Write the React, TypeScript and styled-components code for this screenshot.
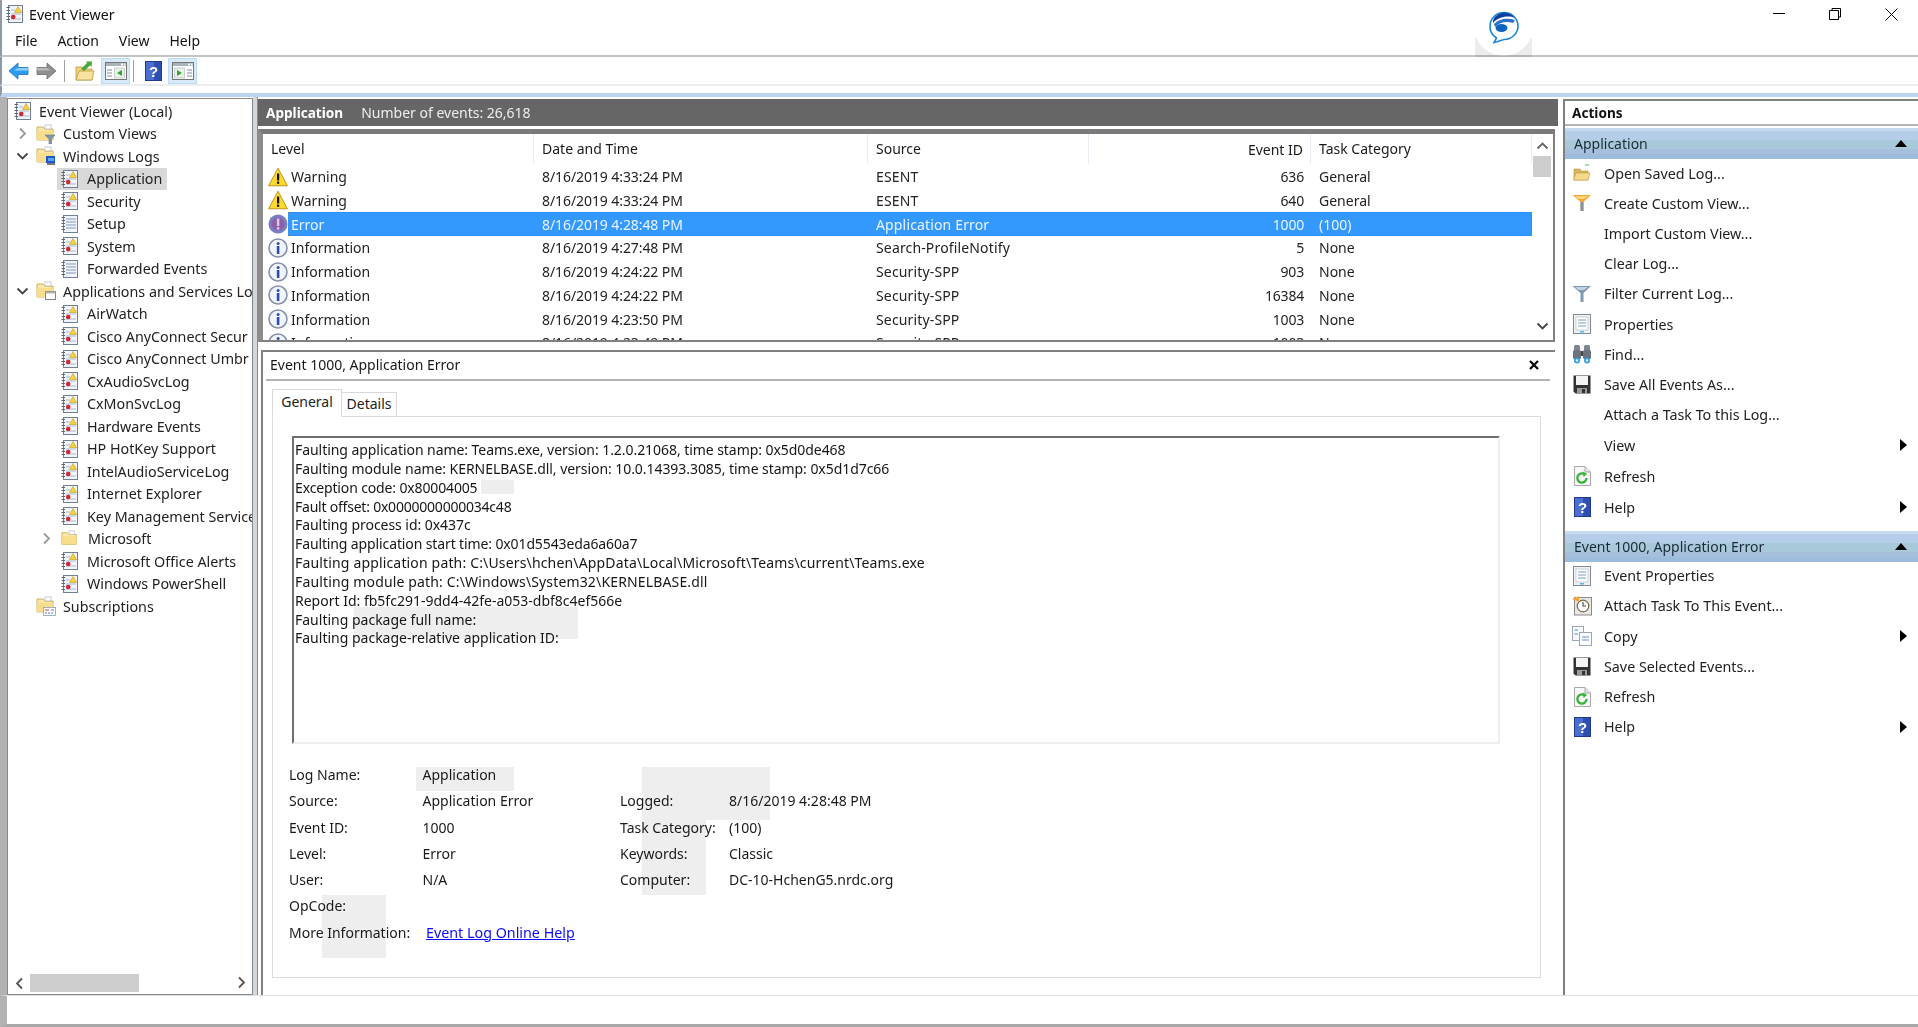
import React from "react";
import styled, { createGlobalStyle, css } from "styled-components";

const Global = createGlobalStyle`
  html, body { margin: 0; padding: 0; background: #fff; overflow: hidden; }
  * { box-sizing: border-box; }
  #root { width: 1918px; height: 1027px; }
`;

const FONT = `"Noto Sans", "Open Sans", "Liberation Sans", sans-serif`;

const Window = styled.div`
  position: relative;
  width: 1918px;
  height: 1027px;
  display: flex;
  flex-direction: column;
  background: #fff;
  font-family: ${FONT};
  font-size: 14px;
  color: #1a1a1a;
  overflow: hidden;
  filter: blur(0.3px);
`;
const TitleBar = styled.div`
  height: 28px;
  flex: none;
  display: flex;
  align-items: center;
  padding-left: 4px;
  border-left: 2px solid #8f9aa6;
  gap: 5px;
`;
const TitleText = styled.span`
  font-size: 14.2px;
  color: #111;
`;
const Controls = styled.div`
  margin-left: auto;
  margin-right: -2px;
  display: flex;
`;
const Control = styled.div`
  width: 56.5px;
  height: 26px;
  display: flex;
  align-items: center;
  justify-content: center;
`;
const LogoBubble = styled.div`
  position: absolute;
  left: 1475px;
  top: 11px;
  width: 57px;
  height: 46px;
  display: flex;
  justify-content: center;
  &::after {
    content: "";
    position: absolute;
    left: 0;
    right: 0;
    top: 27px;
    height: 19px;
    background: radial-gradient(circle at 50% -12px, #fff 29.5px, #ececec 30px);
    mix-blend-mode: multiply;
  }
`;
const MenuBar = styled.div`
  height: 29px;
  flex: none;
  display: flex;
  gap: 20px;
  align-items: center;
  padding: 0 0 2px 13px;
  border-left: 2px solid #8f9aa6;
  border-bottom: 2px solid #c4c4c4;
`;
const MenuItem = styled.span`
  font-size: 14px;
  color: #111;
`;
const Toolbar = styled.div`
  height: 29px;
  flex: none;
  display: flex;
  align-items: center;
  padding: 1px 0 0 2px;
  border-left: 2px solid #8f9aa6;
  border-bottom: 2px solid #eeeeee;
`;
const ToolButton = styled.div<{ $w: number; $on?: boolean }>`
  width: ${(p) => p.$w}px;
  height: 26px;
  display: flex;
  align-items: center;
  justify-content: center;
  ${(p) =>
    p.$on &&
    css`
      background: #d8e9f9;
      border: 1px solid #bcdcf4;
    `}
`;
const ToolSep = styled.div<{ $after: number }>`
  width: 1px;
  height: 22px;
  background: #a0a0a0;
  margin: 0 ${(p) => p.$after}px 0 3px;
`;
const BlueRule = styled.div`
  height: 11px;
  flex: none;
  border-left: 2px solid #8f9aa6;
  border-bottom: 4px solid #bcd4f0;
`;
const Main = styled.div`
  flex: 1;
  min-height: 0;
  display: flex;
  border-left: 7px solid #b2b2b2;
`;
const LeftPane = styled.div`
  width: 246px;
  flex: none;
  margin-top: 1px;
  display: flex;
  flex-direction: column;
  border: 1px solid #808a90;
  border-top: 1px solid #8a8a8a;
  background: #fff;
`;
const Tree = styled.div`
  flex: 1;
  min-height: 0;
  overflow: hidden;
  padding-top: 0.75px;
`;
const TreeRow = styled.div<{ $kind: string }>`
  height: 22.5px;
  display: flex;
  align-items: center;
  white-space: nowrap;
  padding-left: ${(p) =>
    p.$kind === "root" ? 6 : p.$kind === "branch" ? 7 : p.$kind === "sub" ? 31 : 49}px;
`;
const TreeInner = styled.div<{ $on?: boolean; $leaf?: boolean }>`
  display: flex;
  align-items: center;
  height: 22px;
  padding: ${(p) => (p.$leaf ? "0 5px 0 4px" : "0")};
  background: ${(p) => (p.$on ? "#d9d9d9" : "transparent")};
`;
const Chev = styled.span<{ $gap: number }>`
  width: 14px;
  margin-right: ${(p) => p.$gap}px;
  display: flex;
  justify-content: center;
  flex: none;
`;
const IconSlot = styled.span<{ $w: number; $gap: number }>`
  width: ${(p) => p.$w}px;
  margin-right: ${(p) => p.$gap}px;
  display: flex;
  justify-content: center;
  flex: none;
`;
const TreeText = styled.span`
  font-size: 14.3px;
  color: #222;
`;
const HScroll = styled.div`
  height: 20px;
  flex: none;
  display: flex;
  align-items: center;
  padding: 0 6px 2px 7px;
`;
const HThumb = styled.div`
  width: 109px;
  height: 18px;
  margin-left: 6px;
  background: #cdcdcd;
`;
const HEnd = styled.div`
  margin-left: auto;
`;
const Splitter = styled.div`
  width: 5px;
  flex: none;
  background: #d6d6d6;
  border-right: 1px solid #8a8a8a;
`;
const Center = styled.div`
  width: 1300px;
  flex: none;
  display: flex;
  flex-direction: column;
`;
const ResultHead = styled.div`
  height: 27px;
  flex: none;
  margin-top: 2px;
  background: #666666;
  display: flex;
  align-items: center;
  gap: 18px;
  padding-left: 8px;
  color: #ededed;
`;
const ResultTitle = styled.strong`
  color: #fff;
  font-weight: 700;
  font-size: 13.6px;
`;
const ListFrame = styled.div`
  height: 213px;
  flex: none;
  margin-top: 3px;
  margin-right: 3px;
  display: flex;
  border-left: 5px solid #8c8c8c;
  border-top: 5px solid #7a7a7a;
  border-right: 2px solid #808080;
  border-bottom: 2px solid #808080;
  background: #fff;
  overflow: hidden;
`;
const ListBody = styled.div`
  flex: 1;
  min-width: 0;
  overflow: hidden;
`;
const COLS = "271px 334px 221px 222px 1fr";
const ListHead = styled.div`
  height: 30.8px;
  display: grid;
  grid-template-columns: ${COLS};
  align-items: center;
`;
const HeadCell = styled.div<{ $right?: boolean }>`
  height: 30px;
  display: flex;
  align-items: center;
  justify-content: ${(p) => (p.$right ? "flex-end" : "flex-start")};
  padding: ${(p) => (p.$right ? "0 7px 0 0" : "0 0 2px 8px")};
  border-right: 1px solid #e6ecf2;
`;
const ListRow = styled.div<{ $sel?: boolean }>`
  position: relative;
  height: 23.75px;
  display: grid;
  grid-template-columns: ${COLS};
  align-items: center;
  color: ${(p) => (p.$sel ? "#eaf4ff" : "#222")};
  ${(p) =>
    p.$sel &&
    css`
      background: linear-gradient(90deg, transparent 25px, #3399ff 25px);
      &::after {
        content: "";
        position: absolute;
        left: 25px;
        right: 0;
        top: 0;
        bottom: 0;
        border-top: 1px dotted #b3662a;
        border-bottom: 1px dotted #b3662a;
        border-right: 1px dotted #b3662a;
      }
    `}
`;
const LevelCell = styled.div`
  display: flex;
  align-items: center;
  padding-left: 5px;
  gap: 3px;
`;
const Cell = styled.div<{ $right?: boolean; $ls?: number }>`
  padding: ${(p) => (p.$right ? "0 7px 0 0" : "0 0 0 8px")};
  text-align: ${(p) => (p.$right ? "right" : "left")};
  white-space: nowrap;
  letter-spacing: ${(p) => p.$ls ?? 0}px;
`;
const VScroll = styled.div`
  width: 21px;
  flex: none;
  display: flex;
  flex-direction: column;
  align-items: center;
  padding: 7px 2px 5px 1px;
`;
const VThumb = styled.div`
  width: 18px;
  height: 21px;
  margin-top: 6px;
  background: #cdcdcd;
`;
const VEnd = styled.div`
  margin-top: auto;
`;
const Detail = styled.div`
  flex: 1;
  min-height: 0;
  margin: 8px 3px 0 3px;
  border-left: 2px solid #808080;
  border-top: 2px solid #808080;
  display: flex;
  flex-direction: column;
`;
const DetailHead = styled.div`
  height: 29px;
  flex: none;
  margin: 0 5px 0 3px;
  padding: 0 11px 2px 4px;
  display: flex;
  align-items: center;
  justify-content: space-between;
  border-bottom: 2px solid #b4b4b4;
`;
const Tabs = styled.div`
  display: flex;
  align-items: flex-end;
  height: 28px;
  margin: 7px 0 0 9px;
  flex: none;
`;
const Tab = styled.div<{ $on?: boolean }>`
  height: ${(p) => (p.$on ? 28 : 25)}px;
  width: ${(p) => (p.$on ? 70 : 55)}px;
  padding-bottom: 3px;
  border: 1px solid #d9d9d9;
  border-bottom: ${(p) => (p.$on ? "1px solid #fff" : "1px solid #d9d9d9")};
  border-left: ${(p) => (p.$on ? "1px solid #d9d9d9" : "none")};
  margin-bottom: -1px;
  background: #fff;
  position: relative;
  display: flex;
  align-items: center;
  justify-content: center;
  color: #222;
`;
const TabBody = styled.div`
  width: 1269px;
  height: 562px;
  margin-left: 9px;
  flex: none;
  border: 1px solid #dcdcdc;
  padding: 19px 0 0 19px;
`;
const MessageBox = styled.div`
  width: 1208px;
  height: 307.5px;
  border-left: 2px solid #6f6f6f;
  border-top: 2px solid #6f6f6f;
  border-right: 2px solid #eeeeee;
  border-bottom: 2px solid #eeeeee;
  padding: 3px 0 0 1px;
`;
const MsgLine = styled.div<{ $ls: number }>`
  height: 18.85px;
  line-height: 18.85px;
  white-space: nowrap;
  color: #161616;
  letter-spacing: ${(p) => p.$ls}px;
`;
const Summary = styled.div`
  margin: 18px 0 0 -3px;
  display: grid;
  grid-template-columns: 133.5px 197.5px 109px 1fr;
  grid-auto-rows: 26.25px;
  align-items: center;
  white-space: nowrap;
`;
const MoreLink = styled.a`
  color: #0b0bff;
  text-decoration: underline;
  margin-left: 3.5px;
  font-size: 14.3px;
`;
const Empty = styled.span``;
const Actions = styled.div`
  margin-left: 5px;
  flex: 1;
  min-width: 0;
  margin-top: 2px;
  border-left: 2px solid #808080;
  border-top: 2px solid #808080;
  display: flex;
  flex-direction: column;
`;
const ActionsHead = styled.div`
  height: 25px;
  flex: none;
  display: flex;
  align-items: center;
  padding-left: 7px;
  font-weight: 700;
  font-size: 13.6px;
  color: #111;
  border-bottom: 2px solid #b4b4b4;
`;
const Band = styled.div<{ $gap: number }>`
  height: 31px;
  flex: none;
  margin-top: ${(p) => p.$gap}px;
  display: flex;
  align-items: center;
  justify-content: space-between;
  padding: 0 11px 0 9px;
  color: #1a2a3a;
  background: linear-gradient(
    180deg,
    #c5d9f1 0 10%,
    #b6cdea 10% 38%,
    #a8c9da 38% 68%,
    #a6bfdd 68% 85%,
    #9cbcdc 85% 100%
  );
`;
const ActionItem = styled.div<{ $tall?: boolean }>`
  height: ${(p) => (p.$tall ? 31 : 30.2)}px;
  flex: none;
  display: flex;
  align-items: center;
  padding: 0 11px 2px 7px;
  color: #222;
  font-size: 14.3px;
`;
const ActionIcon = styled.span`
  width: 20px;
  margin-right: 12px;
  display: flex;
  justify-content: center;
  flex: none;
`;
const SubArrow = styled.span`
  margin-left: auto;
  display: flex;
`;
const StatusBar = styled.div`
  height: 32px;
  flex: none;
  border-left: 7px solid #b2b2b2;
  border-top: 1px solid #e0e0e0;
  border-bottom: 3px solid #a8a8a8;
  background: #fff;
`;
const Patch = styled.div<{ $l: number; $t: number; $w: number; $h: number }>`
  position: absolute;
  left: ${(p) => p.$l}px;
  top: ${(p) => p.$t}px;
  width: ${(p) => p.$w}px;
  height: ${(p) => p.$h}px;
  background: #eeeeee;
  mix-blend-mode: multiply;
  pointer-events: none;
`;

/* ---------- icons ---------- */
const Spiral = () => (
  <g stroke="#56657a" strokeWidth="1">
    {[2.5, 5.5, 8.5, 11.5, 14.5].map((y) => (
      <line key={y} x1="0.5" x2="4" y1={y} y2={y} />
    ))}
  </g>
);
const LogIcon = ({ plain, size = 18 }: { plain?: boolean; size?: number }) => (
  <svg width={size} height={size} viewBox="0 0 18 18">
    <rect x="2.5" y="0.5" width="14" height="17" fill="#f1f4fa" stroke="#6f7f96" />
    <Spiral />
    {plain ? (
      <g stroke="#8199ba">
        {[4, 7, 10, 13].map((y) => (
          <line key={y} x1="5" x2="15" y1={y} y2={y} />
        ))}
      </g>
    ) : (
      <g>
        <g stroke="#aab8cc">
          <line x1="5" x2="9" y1="5" y2="5" />
          <line x1="5" x2="15" y1="9" y2="9" />
          <line x1="5" x2="15" y1="14" y2="14" />
        </g>
        <path d="M12 1.5 L15.5 7.5 H8.5Z" fill="#f7d23a" stroke="#c49a1c" strokeWidth="0.6" />
        <circle cx="7.2" cy="12" r="2.3" fill="#d3272e" />
      </g>
    )}
  </svg>
);
const Folder = ({ extra }: { extra?: React.ReactNode }) => (
  <svg width="20" height="20" viewBox="0 0 20 20">
    <path d="M1 3 H7 L9 5 H17 V16 H1 Z" fill="#fbe8a6" stroke="#c8a951" strokeWidth="0.9" />
    <rect x="9" y="1" width="6" height="4" fill="#fff" stroke="#b5b5b5" strokeWidth="0.7" />
    <path d="M1 7 H17 V16 H1Z" fill="#f8dd8c" />
    {extra}
  </svg>
);
const FilterBadge = () => <path d="M9 11 H19 L15.5 15 V20 H13 V15 Z" fill="#7f97ab" stroke="#5d7388" strokeWidth="0.5" />;
const PcBadge = () => (
  <g>
    <rect x="10" y="10" width="9" height="7" fill="#1d57c9" />
    <rect x="12" y="12" width="6" height="3" fill="#5aa2f2" />
    <rect x="11" y="17" width="8" height="2" fill="#7a7a7a" />
  </g>
);
const WinBadge = () => (
  <g>
    <rect x="9.5" y="10.5" width="10" height="8" fill="#fff" stroke="#777" strokeWidth="0.9" />
    <rect x="9.5" y="10.5" width="10" height="2" fill="#b5b5b5" />
  </g>
);
const CalBadge = () => (
  <g>
    <rect x="7.5" y="11.5" width="12" height="8" fill="#fff" stroke="#8da0bd" strokeWidth="0.8" />
    <line x1="9" x2="13" y1="14" y2="14" stroke="#d33" />
    <line x1="15" x2="18" y1="14" y2="14" stroke="#4a7fd0" />
    <line x1="9" x2="18" y1="17" y2="17" stroke="#4a7fd0" strokeDasharray="2 1" />
  </g>
);
const ChevronRight = ({ c = "#9a9a9a" }: { c?: string }) => (
  <svg width="9" height="13" viewBox="0 0 9 13">
    <path d="M2 1.5 L7 6.5 L2 11.5" fill="none" stroke={c} strokeWidth="1.8" />
  </svg>
);
const ChevronDown = () => (
  <svg width="13" height="9" viewBox="0 0 13 9">
    <path d="M1.5 1.5 L6.5 6.5 L11.5 1.5" fill="none" stroke="#444" strokeWidth="1.8" />
  </svg>
);
const ChevronLeft = () => (
  <svg width="9" height="13" viewBox="0 0 9 13">
    <path d="M7 1.5 L2 6.5 L7 11.5" fill="none" stroke="#555" strokeWidth="1.8" />
  </svg>
);
const ChevronUp = () => (
  <svg width="13" height="9" viewBox="0 0 13 9">
    <path d="M1.5 7.5 L6.5 2.5 L11.5 7.5" fill="none" stroke="#666" strokeWidth="1.8" />
  </svg>
);
const Warn = () => (
  <svg width="20" height="20" viewBox="0 0 20 20">
    <path d="M10 1.2 L19.4 18.8 H0.6Z" fill="#ffd92c" stroke="#b48a12" strokeWidth="0.9" />
    <rect x="9" y="6.5" width="2.2" height="7" fill="#111" />
    <rect x="9" y="14.6" width="2.2" height="2.2" fill="#111" />
  </svg>
);
const Info = () => (
  <svg width="20" height="20" viewBox="0 0 20 20">
    <circle cx="10" cy="10" r="9" fill="#f2f4fb" stroke="#8790ab" strokeWidth="1.6" />
    <rect x="8.8" y="8" width="2.6" height="8" fill="#2a50b8" />
    <circle cx="10.1" cy="5.5" r="1.5" fill="#2a50b8" />
  </svg>
);
const ErrorIco = () => (
  <svg width="20" height="20" viewBox="0 0 20 20">
    <circle cx="10" cy="10" r="9.5" fill="#7a7cc6" />
    <circle cx="10" cy="10" r="6.5" fill="#8b5fa8" />
    <rect x="8.9" y="4.5" width="2.4" height="7.5" fill="#d8cfe6" />
    <rect x="8.9" y="13.2" width="2.4" height="2.4" fill="#d8cfe6" />
  </svg>
);
const NavArrow = ({ blue, flip }: { blue?: boolean; flip?: boolean }) => (
  <svg width="21" height="18" viewBox="0 0 21 18">
    <g transform={flip ? "matrix(-1 0 0 1 21 0)" : undefined}>
      <path
        d="M1 9 L10 1 V5.5 H20 V12.5 H10 V17 Z"
        fill={blue ? "#2b9cf0" : "#8f8f8f"}
        stroke={blue ? "#1a6fc0" : "#6d6d6d"}
        strokeWidth="0.8"
      />
      <path d="M10 6 H20 V8.5 H6 Z" fill={blue ? "#8fd0fa" : "#b8b8b8"} />
    </g>
  </svg>
);
const OpenIcon = () => (
  <svg width="20" height="20" viewBox="0 0 20 20">
    <path d="M1 6 H8 L10 8 H17 V19 H1 Z" fill="#f3d27c" stroke="#b89a45" strokeWidth="0.8" />
    <path d="M1 19 L4 10 H19 L17 19 Z" fill="#f8e2a0" stroke="#b89a45" strokeWidth="0.8" />
    <path d="M6 8 L12 2 L11 0.5 L17 0.5 L16.5 6 L15 4.5 L9 10 Z" fill="#46a83a" />
  </svg>
);
const PaneIcon = ({ flip }: { flip?: boolean }) => (
  <svg width="22" height="18" viewBox="0 0 22 18">
    <rect x="0.5" y="0.5" width="21" height="17" fill="#fff" stroke="#767676" />
    <rect x="1" y="1" width="20" height="3" fill="#a9b3bd" />
    <rect x="16" y="1.5" width="2" height="2" fill="#fff" />
    <rect x="19" y="1.5" width="1.5" height="2" fill="#fff" />
    {flip ? (
      <g>
        <rect x="2.5" y="6" width="10" height="10" fill="#e9f2e6" stroke="#a7b5c3" strokeWidth="0.6" />
        <path d="M5 8 L10 11 L5 14Z" fill="#33a333" />
        <g stroke="#7f8c99">
          <line x1="15" x2="20" y1="8" y2="8" />
          <line x1="15" x2="20" y1="11" y2="11" />
          <line x1="15" x2="20" y1="14" y2="14" />
        </g>
      </g>
    ) : (
      <g>
        <g stroke="#7f8c99">
          <line x1="2" x2="7" y1="8" y2="8" />
          <line x1="2" x2="7" y1="11" y2="11" />
          <line x1="2" x2="7" y1="14" y2="14" />
        </g>
        <rect x="9.5" y="6" width="10" height="10" fill="#e9f2e6" stroke="#a7b5c3" strokeWidth="0.6" />
        <path d="M17 8 L12 11 L17 14Z" fill="#33a333" />
      </g>
    )}
  </svg>
);
const HelpIcon = ({ size = 17 }: { size?: number }) => (
  <svg width={size} height={size + 3} viewBox="0 0 17 20">
    <rect x="0.5" y="0.5" width="16" height="19" fill="#2f4fb0" stroke="#1f3a88" />
    <rect x="1" y="1" width="8" height="18" fill="#4a6fd0" />
    <text x="8.5" y="15.5" textAnchor="middle" fontSize="15" fontWeight="700" fontFamily="Liberation Sans, sans-serif" fill="#fff">
      ?
    </text>
  </svg>
);
const OpenLogIcon = () => (
  <svg width="18" height="18" viewBox="0 0 18 18">
    <path d="M1 5 H7 L8 7 H15 V16 H1 Z" fill="#dcb55e" stroke="#b5923f" strokeWidth="0.6" />
    <path d="M0.5 16 L3 9 H17 L15 16 Z" fill="#f6d98a" stroke="#bd9b46" strokeWidth="0.6" />
    <line x1="12" x2="16" y1="1" y2="1" stroke="#46c04a" />
  </svg>
);
const Funnel = ({ orange }: { orange?: boolean }) => (
  <svg width="20" height="18" viewBox="0 0 20 18">
    <path d="M0.5 1 H19 L11.5 8 V17 H8.5 V8 Z" fill={orange ? "#f3a73b" : "#7d9ab3"} />
    <path d="M3 2 H16 L12 5 H6.5 Z" fill={orange ? "#ffd977" : "#bfd3e2"} />
    {orange && <path d="M8.5 8 H11.5 V17 H8.5Z" fill="#7f93a6" />}
  </svg>
);
const PropsIcon = () => (
  <svg width="18" height="20" viewBox="0 0 18 20">
    <rect x="0.5" y="0.5" width="17" height="19" fill="#eef1f5" stroke="#7f8a94" />
    <rect x="3" y="3" width="12" height="13" fill="#fff" stroke="#b7c0ca" strokeWidth="0.7" />
    <g stroke="#7f9ab8">
      <line x1="5" x2="13" y1="6" y2="6" />
      <line x1="5" x2="13" y1="9" y2="9" />
      <line x1="5" x2="13" y1="12" y2="12" />
    </g>
    <rect x="7" y="17" width="4" height="1.5" fill="#5cb8e8" />
  </svg>
);
const Binoculars = () => (
  <svg width="20" height="20" viewBox="0 0 20 20">
    <rect x="2" y="1" width="6" height="6" rx="1.5" fill="#7c8693" />
    <rect x="12" y="1" width="6" height="6" rx="1.5" fill="#7c8693" />
    <rect x="1" y="6" width="8" height="9" rx="1.5" fill="#6a7380" />
    <rect x="11" y="6" width="8" height="9" rx="1.5" fill="#6a7380" />
    <rect x="9" y="7" width="2" height="5" fill="#444" />
    <circle cx="5" cy="16.5" r="3" fill="#2f9fe0" />
    <circle cx="15" cy="16.5" r="3" fill="#2f9fe0" />
    <circle cx="5" cy="16.5" r="1.3" fill="#dff2fd" />
    <circle cx="15" cy="16.5" r="1.3" fill="#dff2fd" />
  </svg>
);
const Floppy = () => (
  <svg width="18" height="19" viewBox="0 0 18 19">
    <path d="M0.5 0.5 H17.5 V18.5 H2.5 L0.5 16.5 Z" fill="#333" />
    <rect x="3" y="1" width="12" height="9" fill="#f4f4f4" />
    <rect x="4" y="13" width="10" height="5.5" fill="#9a9a9a" />
    <rect x="9" y="14" width="3" height="4" fill="#333" />
  </svg>
);
const RefreshIcon = () => (
  <svg width="17" height="20" viewBox="0 0 17 20">
    <path d="M0.5 0.5 H11 L16.5 6 V19.5 H0.5 Z" fill="#f7f7f7" stroke="#a8a8a8" />
    <path d="M11 0.5 V6 H16.5" fill="#e4e4e4" stroke="#a8a8a8" />
    <path d="M12.5 12 A4.6 4.6 0 1 1 10.5 8.2" fill="none" stroke="#35b335" strokeWidth="2.3" />
    <path d="M9 5.5 L13 8 L9.5 11 Z" fill="#35b335" />
  </svg>
);
const TaskIcon = () => (
  <svg width="20" height="20" viewBox="0 0 20 20">
    <rect x="2.5" y="1.5" width="17" height="17.5" fill="#e8e8e6" stroke="#8a8a8a" />
    <circle cx="11" cy="10" r="5.8" fill="#fff" stroke="#7b6a4a" strokeWidth="1.2" />
    <path d="M11 6 V10 H14" fill="none" stroke="#444" strokeWidth="1.1" />
    <path d="M0 3 L7 0 V6 Z" fill="#f2a63a" />
  </svg>
);
const CopyIcon = () => (
  <svg width="20" height="20" viewBox="0 0 20 20">
    <rect x="0.5" y="0.5" width="11" height="14" fill="#f6f8fc" stroke="#9aa6b4" />
    <rect x="7.5" y="6.5" width="12" height="13" fill="#fff" stroke="#9aa6b4" />
    <g stroke="#5f8fd0">
      <line x1="2.5" x2="6" y1="4" y2="4" />
      <line x1="2.5" x2="6" y1="8" y2="8" />
      <line x1="10" x2="17" y1="11" y2="11" />
      <line x1="10" x2="17" y1="14" y2="14" />
    </g>
  </svg>
);
const TriUp = () => (
  <svg width="12" height="7" viewBox="0 0 12 7">
    <path d="M0 7 L6 0 L12 7Z" fill="#000" />
  </svg>
);
const TriRight = () => (
  <svg width="7" height="12" viewBox="0 0 7 12">
    <path d="M0 0 L7 6 L0 12Z" fill="#000" />
  </svg>
);
const Logo = () => (
  <svg width="32" height="34" viewBox="0 0 32 34">
    <path
      d="M16 1.5 A14 13.5 0 0 1 30 15 A14 13.5 0 0 1 16 28.5 L8 31 L6 31.5 L8.5 27 A14 13.5 0 0 1 2 15 A14 13.5 0 0 1 16 1.5Z"
      fill="#fff"
      stroke="#1b86d8"
      strokeWidth="1.6"
    />
    <path d="M16 1.5 A14 13.5 0 0 1 27 7 C20 4 10 6 5 12 C4 7 10 2 16 1.5Z" fill="#0d3f9f" />
    <path d="M6 13 C12 7 20 7 27 9 L25 12 C18 10 12 11 7 16Z" fill="#2b6fc8" />
    <ellipse cx="13.5" cy="17" rx="6" ry="4" fill="#0f63bf" />
  </svg>
);

/* ---------- data ---------- */
type Node = { label: string; kind: "root" | "branch" | "leaf" | "sub"; icon: React.ReactNode; chev?: "r" | "d"; on?: boolean };
const log = <LogIcon />;
const plain = <LogIcon plain />;
const tree: Node[] = [
  { label: "Event Viewer (Local)", kind: "root", icon: <LogIcon /> },
  { label: "Custom Views", kind: "branch", chev: "r", icon: <Folder extra={<FilterBadge />} /> },
  { label: "Windows Logs", kind: "branch", chev: "d", icon: <Folder extra={<PcBadge />} /> },
  { label: "Application", kind: "leaf", icon: log, on: true },
  { label: "Security", kind: "leaf", icon: log },
  { label: "Setup", kind: "leaf", icon: plain },
  { label: "System", kind: "leaf", icon: log },
  { label: "Forwarded Events", kind: "leaf", icon: plain },
  { label: "Applications and Services Lo", kind: "branch", chev: "d", icon: <Folder extra={<WinBadge />} /> },
  { label: "AirWatch", kind: "leaf", icon: log },
  { label: "Cisco AnyConnect Secur", kind: "leaf", icon: log },
  { label: "Cisco AnyConnect Umbr", kind: "leaf", icon: log },
  { label: "CxAudioSvcLog", kind: "leaf", icon: log },
  { label: "CxMonSvcLog", kind: "leaf", icon: log },
  { label: "Hardware Events", kind: "leaf", icon: log },
  { label: "HP HotKey Support", kind: "leaf", icon: log },
  { label: "IntelAudioServiceLog", kind: "leaf", icon: log },
  { label: "Internet Explorer", kind: "leaf", icon: log },
  { label: "Key Management Service", kind: "leaf", icon: log },
  { label: "Microsoft", kind: "sub", chev: "r", icon: <Folder /> },
  { label: "Microsoft Office Alerts", kind: "leaf", icon: log },
  { label: "Windows PowerShell", kind: "leaf", icon: log },
  { label: "Subscriptions", kind: "branch", chev: undefined, icon: <Folder extra={<CalBadge />} /> },
];
type Ev = { level: "Warning" | "Error" | "Information"; date: string; src: string; id: string; cat: string };
const events: Ev[] = [
  { level: "Warning", date: "8/16/2019 4:33:24 PM", src: "ESENT", id: "636", cat: "General" },
  { level: "Warning", date: "8/16/2019 4:33:24 PM", src: "ESENT", id: "640", cat: "General" },
  { level: "Error", date: "8/16/2019 4:28:48 PM", src: "Application Error", id: "1000", cat: "(100)" },
  { level: "Information", date: "8/16/2019 4:27:48 PM", src: "Search-ProfileNotify", id: "5", cat: "None" },
  { level: "Information", date: "8/16/2019 4:24:22 PM", src: "Security-SPP", id: "903", cat: "None" },
  { level: "Information", date: "8/16/2019 4:24:22 PM", src: "Security-SPP", id: "16384", cat: "None" },
  { level: "Information", date: "8/16/2019 4:23:50 PM", src: "Security-SPP", id: "1003", cat: "None" },
  { level: "Information", date: "8/16/2019 4:23:49 PM", src: "Security-SPP", id: "1003", cat: "None" },
];
const message: [string, number][] = [
  ["Faulting application name: Teams.exe, version: 1.2.0.21068, time stamp: 0x5d0de468", -0.057],
  ["Faulting module name: KERNELBASE.dll, version: 10.0.14393.3085, time stamp: 0x5d1d7c66", -0.055],
  ["Exception code: 0x80004005", -0.14],
  ["Fault offset: 0x0000000000034c48", -0.22],
  ["Faulting process id: 0x437c", -0.05],
  ["Faulting application start time: 0x01d5543eda6a60a7", -0.12],
  ["Faulting application path: C:\\Users\\hchen\\AppData\\Local\\Microsoft\\Teams\\current\\Teams.exe", 0.16],
  ["Faulting module path: C:\\Windows\\System32\\KERNELBASE.dll", 0.15],
  ["Report Id: fb5fc291-9dd4-42fe-a053-dbf8c4ef566e", 0],
  ["Faulting package full name:", 0],
  ["Faulting package-relative application ID:", 0],
];
const summary: string[][] = [
  ["Log Name:", "Application", "", ""],
  ["Source:", "Application Error", "Logged:", "8/16/2019 4:28:48 PM"],
  ["Event ID:", "1000", "Task Category:", "(100)"],
  ["Level:", "Error", "Keywords:", "Classic"],
  ["User:", "N/A", "Computer:", "DC-10-HchenG5.nrdc.org"],
  ["OpCode:", "", "", ""],
];
type Act = { label: string; icon?: React.ReactNode; sub?: boolean; tall?: boolean };
const actionsA: Act[] = [
  { label: "Open Saved Log...", icon: <OpenLogIcon /> },
  { label: "Create Custom View...", icon: <Funnel orange /> },
  { label: "Import Custom View..." },
  { label: "Clear Log..." },
  { label: "Filter Current Log...", icon: <Funnel /> },
  { label: "Properties", icon: <PropsIcon /> },
  { label: "Find...", icon: <Binoculars /> },
  { label: "Save All Events As...", icon: <Floppy /> },
  { label: "Attach a Task To this Log..." },
  { label: "View", sub: true, tall: true },
  { label: "Refresh", icon: <RefreshIcon />, tall: true },
  { label: "Help", icon: <HelpIcon />, sub: true, tall: true },
];
const actionsB: Act[] = [
  { label: "Event Properties", icon: <PropsIcon /> },
  { label: "Attach Task To This Event...", icon: <TaskIcon /> },
  { label: "Copy", icon: <CopyIcon />, sub: true },
  { label: "Save Selected Events...", icon: <Floppy /> },
  { label: "Refresh", icon: <RefreshIcon /> },
  { label: "Help", icon: <HelpIcon />, sub: true },
];
const patches = [
  [642, 767, 128, 53],
  [642, 820, 64, 75],
  [322, 895, 64, 63],
  [416, 767, 98, 24],
  [481, 480, 33, 14],
  [354, 607, 224, 32],
];

const ActionList = ({ items }: { items: Act[] }) => (
  <>
    {items.map((a) => (
      <ActionItem key={a.label + (a.sub ? "s" : "")} $tall={a.tall}>
        <ActionIcon>{a.icon}</ActionIcon>
        {a.label}
        {a.sub && (
          <SubArrow>
            <TriRight />
          </SubArrow>
        )}
      </ActionItem>
    ))}
  </>
);

export default function App() {
  return (
    <Window>
      <Global />
      <TitleBar>
        <LogIcon />
        <TitleText>Event Viewer</TitleText>
        <Controls>
          <Control>
            <svg width="12" height="2" viewBox="0 0 12 2">
              <rect width="12" height="1" fill="#000" />
            </svg>
          </Control>
          <Control>
            <svg width="12" height="12" viewBox="0 0 12 12">
              <path d="M3 2.5 V0.5 H11.5 V9 H9.5 M0.5 2.5 H9.5 V11.5 H0.5 Z" fill="none" stroke="#000" />
            </svg>
          </Control>
          <Control>
            <svg width="13" height="13" viewBox="0 0 13 13">
              <path d="M0.5 0.5 L12.5 12.5 M12.5 0.5 L0.5 12.5" stroke="#000" />
            </svg>
          </Control>
        </Controls>
      </TitleBar>
      <LogoBubble>
        <Logo />
      </LogoBubble>
      <MenuBar>
        {["File", "Action", "View", "Help"].map((m) => (
          <MenuItem key={m}>{m}</MenuItem>
        ))}
      </MenuBar>
      <Toolbar>
        <ToolButton $w={28}>
          <NavArrow blue />
        </ToolButton>
        <ToolButton $w={29}>
          <NavArrow flip />
        </ToolButton>
        <ToolSep $after={3} />
        <ToolButton $w={33}>
          <OpenIcon />
        </ToolButton>
        <ToolButton $w={29} $on>
          <PaneIcon />
        </ToolButton>
        <ToolSep $after={5} />
        <ToolButton $w={29}>
          <HelpIcon />
        </ToolButton>
        <ToolButton $w={29} $on>
          <PaneIcon flip />
        </ToolButton>
      </Toolbar>
      <BlueRule />
      <Main>
        <LeftPane>
          <Tree>
            {tree.map((n) => (
              <TreeRow key={n.label} $kind={n.kind}>
                <TreeInner $on={n.on} $leaf={n.kind === "leaf"}>
                  {n.kind === "branch" && (
                    <Chev $gap={7}>{n.chev === "r" ? <ChevronRight /> : n.chev === "d" ? <ChevronDown /> : null}</Chev>
                  )}
                  {n.kind === "sub" && (
                    <Chev $gap={8}>
                      <ChevronRight />
                    </Chev>
                  )}
                  <IconSlot
                    $w={n.kind === "branch" ? 20 : 18}
                    $gap={n.kind === "branch" ? 7 : n.kind === "sub" ? 9 : n.kind === "root" ? 7 : 8}
                  >
                    {n.icon}
                  </IconSlot>
                  <TreeText>{n.label}</TreeText>
                </TreeInner>
              </TreeRow>
            ))}
          </Tree>
          <HScroll>
            <ChevronLeft />
            <HThumb />
            <HEnd>
              <ChevronRight c="#555" />
            </HEnd>
          </HScroll>
        </LeftPane>
        <Splitter />
        <Center>
          <ResultHead>
            <ResultTitle>Application</ResultTitle>
            <span>Number of events: 26,618</span>
          </ResultHead>
          <ListFrame>
            <ListBody>
              <ListHead>
                <HeadCell>Level</HeadCell>
                <HeadCell>Date and Time</HeadCell>
                <HeadCell>Source</HeadCell>
                <HeadCell $right>Event ID</HeadCell>
                <HeadCell>Task Category</HeadCell>
              </ListHead>
              {events.map((e, i) => (
                <ListRow key={i} $sel={e.level === "Error"}>
                  <LevelCell>
                    {e.level === "Warning" ? <Warn /> : e.level === "Error" ? <ErrorIco /> : <Info />}
                    {e.level}
                  </LevelCell>
                  <Cell $ls={-0.08}>{e.date}</Cell>
                  <Cell $ls={0.15}>{e.src}</Cell>
                  <Cell $right $ls={-0.2}>{e.id}</Cell>
                  <Cell>{e.cat}</Cell>
                </ListRow>
              ))}
            </ListBody>
            <VScroll>
              <ChevronUp />
              <VThumb />
              <VEnd>
                <ChevronDown />
              </VEnd>
            </VScroll>
          </ListFrame>
          <Detail>
            <DetailHead>
              <span>Event 1000, Application Error</span>
              <svg width="10" height="10" viewBox="0 0 10 10">
                <path d="M1 1 L9 9 M9 1 L1 9" stroke="#000" strokeWidth="2.2" />
              </svg>
            </DetailHead>
            <Tabs>
              <Tab $on>General</Tab>
              <Tab>Details</Tab>
            </Tabs>
            <TabBody>
              <MessageBox>
                {message.map(([m, ls]) => (
                  <MsgLine key={m} $ls={ls}>
                    {m}
                  </MsgLine>
                ))}
              </MessageBox>
              <Summary>
                {summary.flat().map((t, i) => (t ? <span key={i}>{t}</span> : <Empty key={i} />))}
                <span>More Information:</span>
                <MoreLink href="#">Event Log Online Help</MoreLink>
              </Summary>
            </TabBody>
          </Detail>
        </Center>
        <Actions>
          <ActionsHead>Actions</ActionsHead>
          <Band $gap={2}>
            Application
            <TriUp />
          </Band>
          <ActionList items={actionsA} />
          <Band $gap={7}>
            Event 1000, Application Error
            <TriUp />
          </Band>
          <ActionList items={actionsB} />
        </Actions>
      </Main>
      <StatusBar />
      {patches.map(([l, t, w, h]) => (
        <Patch key={`${l}-${t}`} $l={l} $t={t} $w={w} $h={h} />
      ))}
    </Window>
  );
}
